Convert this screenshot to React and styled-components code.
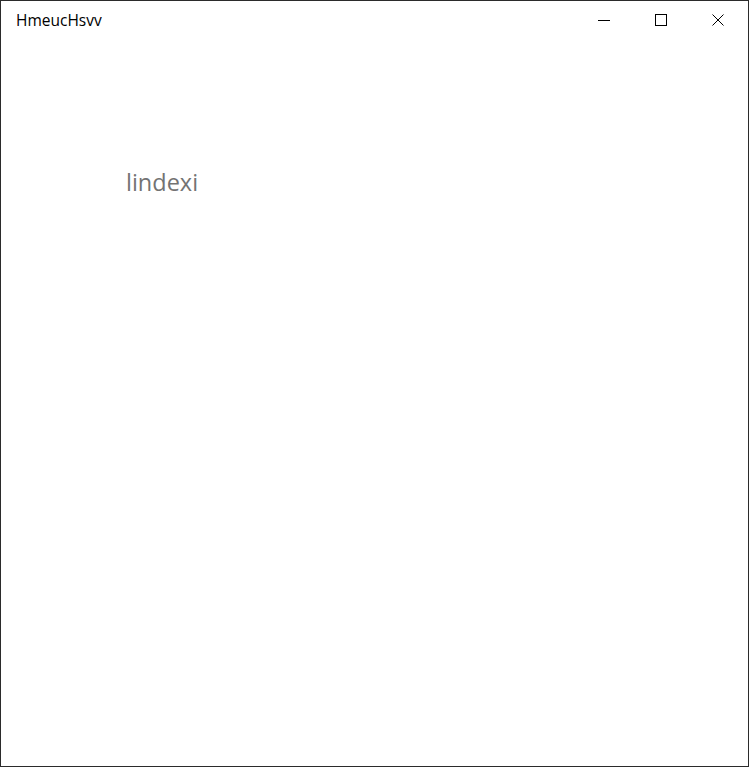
import styled, { createGlobalStyle } from "styled-components";

const GlobalStyle = createGlobalStyle`
  html, body {
    margin: 0;
    padding: 0;
    background: #ffffff;
  }
`;

// Window frame
const Window = styled.div`
  box-sizing: border-box;
  width: 749px;
  height: 767px;
  border: 1px solid #2b2b2b;
  background: #ffffff;
  display: flex;
  flex-direction: column;
  font-family: "Open Sans", "Noto Sans", sans-serif;
`;

// Title bar
const TitleBar = styled.div`
  height: 38px;
  display: flex;
  align-items: center;
  justify-content: space-between;
  flex-shrink: 0;
`;

const Title = styled.div`
  padding-left: 15px;
  font-size: 15.5px;
  color: #000000;
  padding-bottom: 1px;
`;

const Controls = styled.div`
  display: flex;
  height: 100%;
  padding-right: 2px;
`;

const ControlButton = styled.div`
  width: 57px;
  height: 100%;
  display: flex;
  align-items: center;
  justify-content: center;
  color: #000;
`;

// Page content
const Content = styled.div`
  flex: 1;
  padding: 127px 0 0 125px;
`;

const Label = styled.div`
  font-size: 23.5px;
  color: #737373;
  line-height: 32px;
`;

const App = () => (
  <>
    <GlobalStyle />
    <Window>
      <TitleBar>
        <Title>HmeucHsvv</Title>
        <Controls>
          <ControlButton>
            <svg width="12" height="12" viewBox="0 0 12 12">
              <line x1="0" y1="6.5" x2="12" y2="6.5" stroke="#000" strokeWidth="1" />
            </svg>
          </ControlButton>
          <ControlButton>
            <svg width="12" height="12" viewBox="0 0 12 12">
              <rect x="0.5" y="0.5" width="11" height="11" fill="none" stroke="#000" strokeWidth="1" />
            </svg>
          </ControlButton>
          <ControlButton>
            <svg width="12" height="12" viewBox="0 0 12 12">
              <path d="M0.5 0.5 L11.5 11.5 M11.5 0.5 L0.5 11.5" stroke="#000" strokeWidth="1" />
            </svg>
          </ControlButton>
        </Controls>
      </TitleBar>
      <Content>
        <Label>lindexi</Label>
      </Content>
    </Window>
  </>
);

export default App;
